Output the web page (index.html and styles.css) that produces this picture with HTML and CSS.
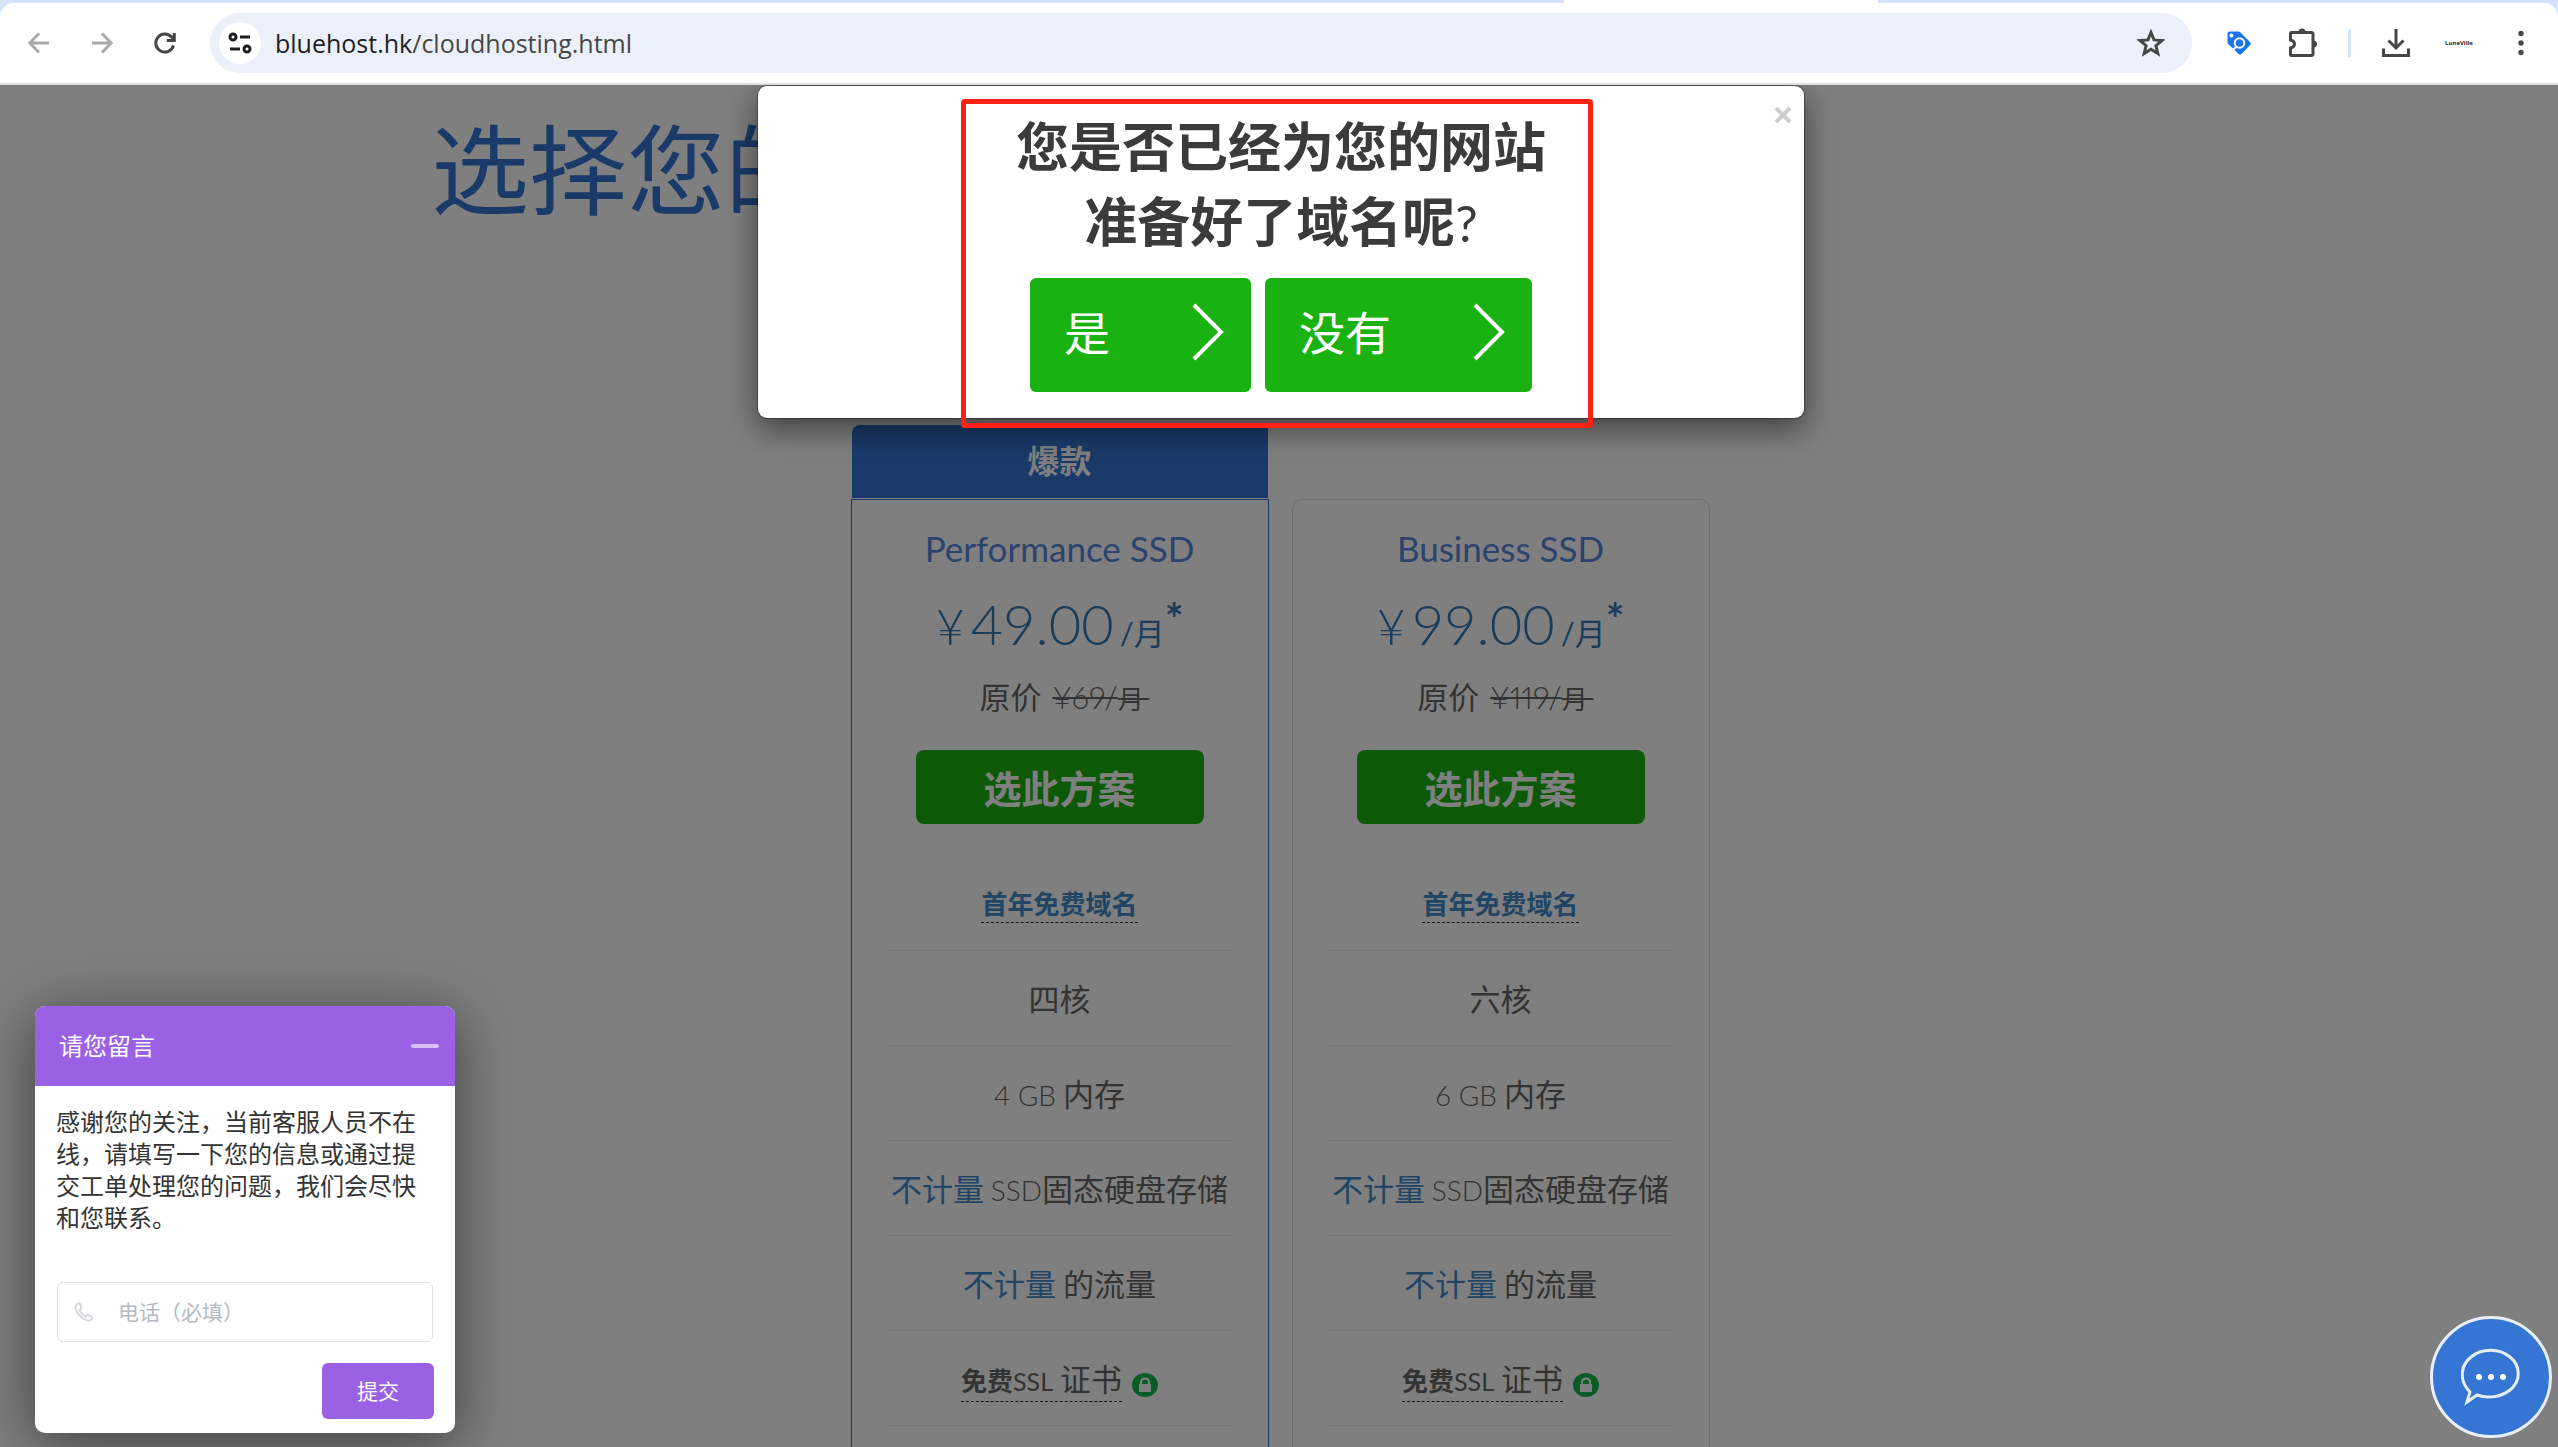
FILE: index.html
```html
<!DOCTYPE html>
<html lang="zh-CN">
<head>
<meta charset="utf-8">
<title>bluehost.hk</title>
<link rel="stylesheet" href="styles.css">
</head>
<body>
<header class="browser">
  <div class="tab-foot"></div>
  <div class="toolbar">
    <nav class="nav-buttons">
      <button class="icon-btn muted" aria-label="后退"><svg width="22" height="22" viewBox="0 0 22 22"><path d="M21 11H2M11 1.500L1.800 11l9.200 9.500"/></svg></button>
      <button class="icon-btn muted" aria-label="前进"><svg width="22" height="22" viewBox="0 0 22 22"><path d="M1 11h19M11 1.500l9.200 9.500-9.200 9.500"/></svg></button>
      <button class="icon-btn" aria-label="刷新"><svg width="22" height="22" viewBox="0 0 22 22"><path d="M19.500 13.500a9 9 0 1 1-1.800-8.300L20 7.500M20.300 1v7.500h-7.500"/></svg></button>
    </nav>
    <div class="omnibox">
      <button class="site-info" aria-label="网站信息"><svg width="24" height="22" viewBox="0 0 24 22"><circle cx="5" cy="5" r="3"/><path d="M12 5h10M2 17h10"/><circle cx="19" cy="17" r="3"/></svg></button>
      <p class="url"><span class="host">bluehost.hk</span>/cloudhosting.html</p>
      <button class="icon-btn" aria-label="收藏"><svg width="28" height="28" viewBox="0 0 28 28"><path d="M14 3.500l3 7.400 8 .6-6.100 5.200 1.900 7.800L14 20.300l-6.800 4.200 1.900-7.800L3 11.500l8-.6z"/></svg></button>
    </div>
    <div class="tools">
      <button class="icon-btn" aria-label="标签扩展"><svg width="26" height="26" viewBox="0 0 26 26"><path d="M1.500 3.500q0-2 2-2h9q1 0 1.700.7l10 10q1.300 1.400 0 2.800l-8.800 9q-1.400 1.300-2.800 0L2.200 14q-.7-.7-.7-1.500z" fill="#1a73e8" stroke="none"/><circle cx="5.500" cy="5.500" r="2" fill="#fff" stroke="none"/><circle cx="13.500" cy="13" r="4.800" fill="none" stroke="#fff" stroke-width="2"/><path d="M10 17l-3 3" stroke="#fff" stroke-width="2"/></svg></button>
      <button class="icon-btn" aria-label="扩展程序"><svg width="30" height="30" viewBox="0 0 30 30"><path d="M2.500 5.500q0-1 1-1h20q1.500 0 1.500 1.500v20q0 1.500-1.500 1.500h-20q-1 0-1-1v-6.500q4-.8 4-4t-4-4z"/><path d="M10.500 4a3.500 3.500 0 0 1 7 0zM25.500 12.500a3.500 3.500 0 0 1 0 7z" fill="#474747" stroke="none"/></svg></button>
      <span class="divider"></span>
      <button class="icon-btn" aria-label="下载"><svg width="30" height="30" viewBox="0 0 30 30"><path d="M15 1v18M7.500 12.500L15 20l7.500-7.500M2.500 20.500v7h25v-7"/></svg></button>
      <button class="profile">LuneVille</button>
      <button class="icon-btn" aria-label="菜单"><svg width="6" height="26" viewBox="0 0 6 26"><g fill="#474747" stroke="none"><circle cx="3" cy="3.500" r="2.700"/><circle cx="3" cy="13" r="2.700"/><circle cx="3" cy="22.500" r="2.700"/></g></svg></button>
    </div>
  </div>
</header>

<div class="viewport">
  <main class="page">
    <h1 class="title">选择您的</h1>
    <div class="plans">
      <section class="plan featured">
        <p class="ribbon">爆款</p>
        <div class="card">
          <h2 class="name">Performance SSD</h2>
          <p class="price"><span class="yen">¥</span><span class="amount">49.00</span><span class="unit">/月</span><sup>*</sup></p>
          <p class="was">原价 <del><span class="latin-big">¥69/</span>月&nbsp;</del></p>
          <button class="choose">选此方案</button>
          <ul class="features">
            <li><a href="#" class="free-domain">首年免费域名</a></li>
            <li>四核</li>
            <li><span class="latin">4 GB</span> 内存</li>
            <li><span class="accent">不计量</span> <span class="latin">SSD</span>固态硬盘存储</li>
            <li><span class="accent">不计量</span> 的流量</li>
            <li><span class="ssl"><b>免费</b><span class="ssl-name">SSL</span> 证书</span><svg class="lock" width="26" height="24" viewBox="0 0 26 24"><ellipse cx="13" cy="12" rx="13" ry="12" fill="#14b84c"/><path d="M9 11V9q0-3.500 4-3.500T17 9v2" fill="none" stroke="#fff" stroke-width="2"/><rect x="7" y="11" width="12" height="8" fill="#fff"/></svg></li>
            <li></li>
          </ul>
        </div>
      </section>
      <section class="plan">
        <div class="card">
          <h2 class="name">Business SSD</h2>
          <p class="price"><span class="yen">¥</span><span class="amount">99.00</span><span class="unit">/月</span><sup>*</sup></p>
          <p class="was">原价 <del><span class="latin-big">¥119/</span>月&nbsp;</del></p>
          <button class="choose">选此方案</button>
          <ul class="features">
            <li><a href="#" class="free-domain">首年免费域名</a></li>
            <li>六核</li>
            <li><span class="latin">6 GB</span> 内存</li>
            <li><span class="accent">不计量</span> <span class="latin">SSD</span>固态硬盘存储</li>
            <li><span class="accent">不计量</span> 的流量</li>
            <li><span class="ssl"><b>免费</b><span class="ssl-name">SSL</span> 证书</span><svg class="lock" width="26" height="24" viewBox="0 0 26 24"><ellipse cx="13" cy="12" rx="13" ry="12" fill="#14b84c"/><path d="M9 11V9q0-3.500 4-3.500T17 9v2" fill="none" stroke="#fff" stroke-width="2"/><rect x="7" y="11" width="12" height="8" fill="#fff"/></svg></li>
            <li></li>
          </ul>
        </div>
      </section>
    </div>
  </main>

  <div class="backdrop"></div>

  <div class="modal" role="dialog" aria-labelledby="ask">
    <button class="close" aria-label="关闭"><svg width="18" height="18" viewBox="0 0 18 18"><path d="M2 2l14 14M16 2L2 16"/></svg></button>
    <h2 class="ask" id="ask">您是否已经为您的网站<br>准备好了域名呢<span class="mark">?</span></h2>
    <div class="answers">
      <button class="answer"><span>是</span><svg width="32" height="58" viewBox="0 0 32 58"><path d="M2 2l27 27L2 56"/></svg></button>
      <button class="answer"><span>没有</span><svg width="32" height="58" viewBox="0 0 32 58"><path d="M2 2l27 27L2 56"/></svg></button>
    </div>
    <div class="highlight"></div>
  </div>

  <form class="chat">
    <div class="chat-head"><span class="chat-title">请您留言</span><button type="button" class="minimize" aria-label="最小化"></button></div>
    <div class="chat-body">
      <p class="chat-text">感谢您的关注，当前客服人员不在线，请填写一下您的信息或通过提交工单处理您的问题，我们会尽快和您联系。</p>
      <label class="phone"><svg width="20" height="20" viewBox="0 0 20 20"><path d="M2.500 2.500q2.500-2 4 0l.5 3.500q0 1-1.500 2 1.500 4 6 6.500 1.500-2 3-1.500l3 1.500q2 1.500-.5 3.500-3 2-8-1.500-5-3.500-7-8.500-1-3.500.5-5.500z"/></svg><input type="tel" placeholder="电话（必填）" aria-label="电话"></label>
      <button type="button" class="submit">提交</button>
    </div>
  </form>

  <button class="bubble" aria-label="在线客服"><svg width="60" height="58" viewBox="0 0 60 58"><path d="M9 44C-2 33-1 18 10 9c11-9 28-9 39 0 11 9 11 24 0 33-9 7-22 9-33 5l-10 7z" fill="none" stroke="#e6eefb" stroke-width="3"/><g fill="#fff"><circle cx="18" cy="29" r="3"/><circle cx="30" cy="29" r="3"/><circle cx="42" cy="29" r="3"/></g></svg></button>
</div>
</body>
</html>
```
FILE: styles.css
```css
* { box-sizing: border-box; }

body {
  margin: 0;
  height: 100vh;
  display: flex;
  flex-direction: column;
  overflow: hidden;
  font-family: "Noto Sans CJK SC", sans-serif;
  color: #666;
}

h1, h2, p, ul { margin: 0; padding: 0; }
ul { list-style: none; }
button { font: inherit; border: 0; padding: 0; background: none; cursor: pointer; }
svg { display: block; }

/* Browser chrome */
.browser {
  position: relative;
  background: #d3e3fd;
  padding-top: 3px;
  border-bottom: 2px solid #e0e0e0;
}
.tab-foot {
  position: absolute;
  top: 0;
  left: 1564px;
  width: 314px;
  height: 3px;
  background: #fff;
}
.toolbar {
  display: flex;
  align-items: center;
  height: 80px;
  padding: 0 34px 0 28px;
  background: #fff;
  border-radius: 14px 14px 0 0;
}
.nav-buttons { display: flex; gap: 41px; margin-right: 34px; }
.icon-btn svg { fill: none; stroke: #474747; stroke-width: 3; }
.muted svg { stroke: #a9a9a9; }
.omnibox {
  flex: 1;
  display: flex;
  align-items: center;
  height: 60px;
  padding: 0 27px 0 9px;
  border-radius: 30px;
  background: #ebf0fa;
}
.site-info {
  display: grid;
  place-items: center;
  width: 42px;
  height: 42px;
  border-radius: 50%;
  background: #fff;
}
.site-info svg { fill: none; stroke: #1f1f1f; stroke-width: 3; }
.url {
  flex: 1;
  margin-left: 14px;
  font: 25px/36px "Open Sans", sans-serif;
  color: #474747;
}
.host { color: #1f1f1f; }
.tools { display: flex; align-items: center; margin-left: 34px; gap: 30px; }
.tools .icon-btn:nth-child(2) { margin-left: 6px; }
.divider { width: 3px; height: 28px; background: #d3e3fd; }
.profile { width: 28px; margin: 0 15px 0 4px; font: 700 6px/8px "Open Sans", sans-serif; color: #222; }

/* Pricing page */
.viewport { position: relative; flex: 1; overflow: hidden; background: #fff; }
.page { width: 67%; max-width: 1696px; margin: 0 auto; }
.title {
  padding-top: 10px;
  font-size: 98px;
  line-height: 138px;
  font-weight: 400;
  color: #3575d3;
}
.plans {
  display: flex;
  justify-content: center;
  align-items: flex-end;
  gap: 23px;
  margin-top: 192px;
  padding-left: 2px;
}
.plan { width: 418px; }
.ribbon {
  height: 73px;
  margin: 0 1px 1px;
  border-radius: 8px 0 0 0;
  background: #3575d3;
  color: #fff;
  text-align: center;
  font-size: 32px;
  line-height: 68px;
  font-weight: 700;
}
.card {
  border: 1px solid #ddd;
  border-radius: 10px;
  padding: 22px 35px 0;
  text-align: center;
}
.featured .card { border-color: #3575d3; border-radius: 0; }
.name {
  font-family: Lato, sans-serif;
  font-size: 35px;
  line-height: 52px;
  font-weight: 400;
  color: #5488dc;
}
.price {
  display: flex;
  justify-content: center;
  align-items: baseline;
  height: 84px;
  line-height: 92px;
  margin: 4px 0 12px;
  font-family: Lato, "Noto Sans CJK SC", sans-serif;
  font-weight: 300;
  color: #337ab7;
}
.yen { font-size: 50px; margin-right: 6px; }
.amount { font-size: 56px; }
.unit { font-size: 31px; margin-left: 6px; font-weight: 400; }
.price sup { font-size: 44px; font-weight: 700; line-height: 44px; align-self: flex-start; margin-top: 18px; }
.was { padding-left: 10px; font-size: 31px; line-height: 44px; }
.was del { margin-left: 4px; font-size: 26px; }
.latin-big { font-family: Lato, sans-serif; font-size: 31px; font-weight: 300; font-variant-numeric: proportional-nums; }
.choose {
  width: 288px;
  height: 74px;
  margin: 30px 0 30px;
  border-radius: 8px;
  background: #19b211;
  color: #fff;
  font-size: 38px;
  line-height: 74px;
  font-weight: 700;
}
.features li {
  height: 95px;
  border-bottom: 1px solid #eee;
  font-size: 31px;
  line-height: 94px;
  white-space: nowrap;
}
.features li:first-child { height: 97px; }
.accent, .free-domain { color: #428bca; }
.free-domain {
  display: inline-block;
  font-size: 26px;
  line-height: 38px;
  font-weight: 700;
  text-decoration: none;
  border-bottom: 1px dashed #222;
}
.latin { font-family: Lato, sans-serif; font-size: 28px; font-weight: 300; }
.ssl { display: inline-block; border-bottom: 1px dashed #222; line-height: 40px; }
.ssl b { font-size: 26px; }
.ssl-name { font-family: Lato, sans-serif; font-size: 25px; }
.lock { display: inline-block; margin-left: 10px; vertical-align: -6px; }

.backdrop { position: absolute; inset: 0; background: rgba(0, 0, 0, .5); }

/* Domain question dialog */
.modal {
  position: absolute;
  top: 0;
  left: 0;
  right: -4px;
  width: 41%;
  min-width: 680px;
  margin: 0 auto;
  padding: 21px 0 26px;
  border: 1px solid rgba(0, 0, 0, .3);
  border-radius: 10px;
  background: #fff;
  background-clip: padding-box;
  box-shadow: 0 10px 30px rgba(0, 0, 0, .5);
  text-align: center;
}
.close { position: absolute; top: 20px; right: 12px; }
.close svg { fill: none; stroke: #ccc; stroke-width: 4; }
.ask { font-size: 53px; line-height: 75px; font-weight: 700; color: #3b3b3b; }
.mark { font-family: Lato, sans-serif; font-size: 50px; line-height: 50px; font-weight: 400; }
.answers { display: flex; justify-content: center; gap: 14px; margin-top: 21px; }
.answer {
  display: flex;
  align-items: center;
  gap: 82px;
  height: 114px;
  padding: 0 27px 6px 34px;
  border-radius: 6px;
  background: #19b211;
  color: #fff;
  font-size: 46px;
}
.answer span { padding-bottom: 4px; }
.answer svg { fill: none; stroke: #fff; stroke-width: 4; }
.highlight {
  position: absolute;
  top: 13px;
  bottom: -10px;
  left: 203px;
  right: 211px;
  border: 5px solid #ff2114;
  border-radius: 4px;
  pointer-events: none;
}

/* Message form */
.chat {
  position: absolute;
  left: 35px;
  bottom: 14px;
  width: 420px;
  border-radius: 10px;
  overflow: hidden;
  background: #fff;
  box-shadow: 0 10px 60px rgba(0, 0, 0, .5);
}
.chat-head {
  display: flex;
  align-items: center;
  justify-content: space-between;
  height: 80px;
  padding: 0 16px 0 24px;
  background: #9a61e5;
  color: #fff;
  font-size: 24px;
}
.chat-title { padding-bottom: 4px; }
.minimize { width: 28px; height: 4px; border-radius: 2px; background: #d7c0f5; }
.chat-body { padding: 19px 21px 14px; }
.chat-text { width: 375px; font-size: 24px; line-height: 32px; color: #333; }
.phone {
  display: flex;
  align-items: center;
  gap: 24px;
  height: 60px;
  margin: 49px 1px 21px;
  padding: 0 16px;
  border: 1px solid #dcdfe6;
  border-radius: 6px;
}
.phone svg { flex: none; fill: none; stroke: #d5d7db; stroke-width: 2; }
.phone input {
  flex: 1;
  min-width: 0;
  border: 0;
  padding: 0 0 3px;
  outline: 0;
  font: 21px/30px "Noto Sans CJK SC", sans-serif;
}
.phone input::placeholder { color: #b4b8bf; }
.submit {
  display: block;
  width: 112px;
  height: 56px;
  margin-left: auto;
  padding-bottom: 3px;
  border-radius: 6px;
  background: #9a61e5;
  color: #fff;
  font-size: 21px;
}
.bubble {
  position: absolute;
  right: 6px;
  bottom: 9px;
  display: grid;
  place-items: center;
  width: 122px;
  height: 122px;
  border: 3px solid #e9effa;
  border-radius: 50%;
  background: #3575d3;
}
```
